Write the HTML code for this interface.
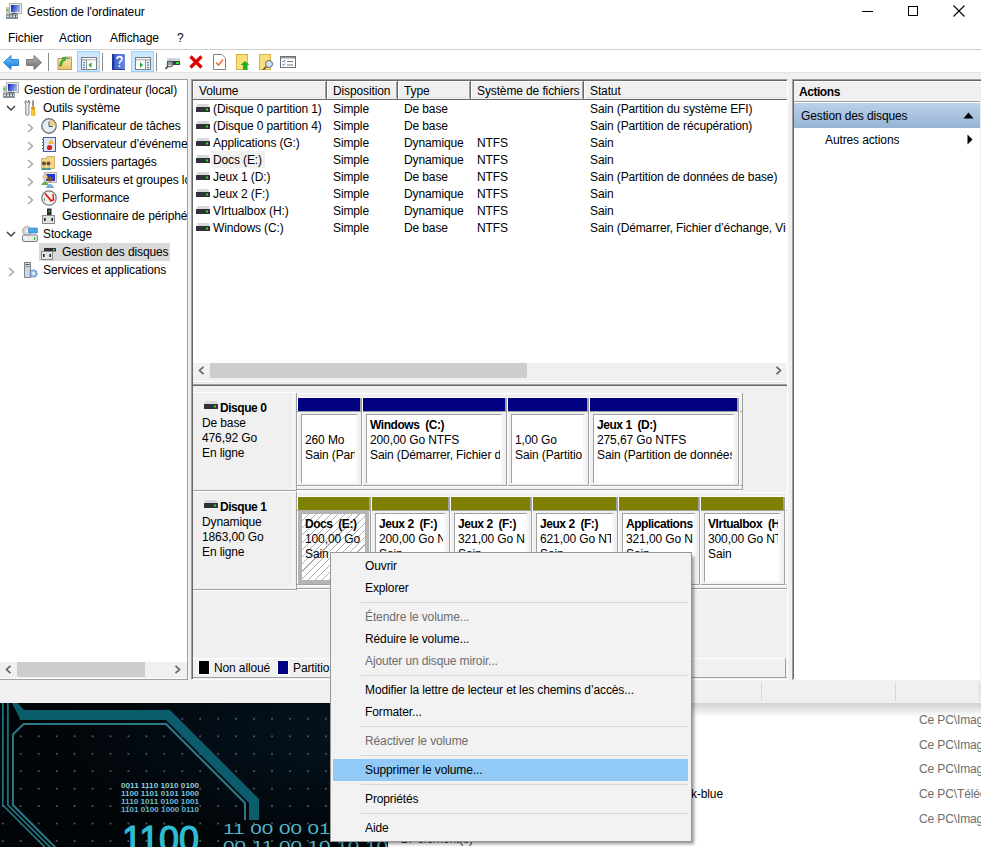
<!DOCTYPE html>
<html><head><meta charset="utf-8">
<style>
*{box-sizing:border-box}
html,body{margin:0;padding:0;width:981px;height:847px;overflow:hidden;background:#fff;position:relative;font-family:"Liberation Sans",sans-serif}
.a{position:absolute;display:block}
.t{position:absolute;font:12px/15px "Liberation Sans",sans-serif;white-space:nowrap;color:#000;letter-spacing:-0.12px}
.b{font-weight:bold;letter-spacing:-0.45px}
.g{color:#6d6d6d}
.gp{color:#6d6d6d}
</style></head><body>

<div class="a" style="left:388px;top:703px;width:593px;height:144px;background:#fff"></div>
<div class="t" style="left:919px;top:713px;color:#6d6d6d">Ce PC\Imag</div>
<div class="t" style="left:919px;top:738px;color:#6d6d6d">Ce PC\Imag</div>
<div class="t" style="left:919px;top:762px;color:#6d6d6d">Ce PC\Imag</div>
<div class="t" style="left:919px;top:787px;color:#6d6d6d">Ce PC\Téléc</div>
<div class="t" style="left:919px;top:812px;color:#6d6d6d">Ce PC\Imag</div>
<div class="t" style="left:691px;top:787px;">k-blue</div>
<div class="t" style="left:401px;top:832px;color:#333">27 élément(s)</div>
<svg class="a" style="left:0;top:703px" width="388" height="144" viewBox="0 0 388 144"><defs><radialGradient id="bgg" cx="0.9" cy="0.2" r="0.8"><stop offset="0" stop-color="#05131f"/><stop offset="1" stop-color="#010508"/></radialGradient></defs><rect width="388" height="144" fill="url(#bgg)"/><g fill="#4a5a60"><rect x="1.9" y="14.9" width="1.8" height="1.8"/><rect x="19.8" y="14.9" width="1.8" height="1.8"/><rect x="37.8" y="14.9" width="1.8" height="1.8"/><rect x="55.8" y="14.9" width="1.8" height="1.8"/><rect x="73.7" y="14.9" width="1.8" height="1.8"/><rect x="91.7" y="14.9" width="1.8" height="1.8"/><rect x="109.6" y="14.9" width="1.8" height="1.8"/><rect x="127.5" y="14.9" width="1.8" height="1.8"/><rect x="145.5" y="14.9" width="1.8" height="1.8"/><rect x="163.4" y="14.9" width="1.8" height="1.8"/><rect x="181.4" y="14.9" width="1.8" height="1.8"/><rect x="199.3" y="14.9" width="1.8" height="1.8"/><rect x="217.3" y="14.9" width="1.8" height="1.8"/><rect x="235.2" y="14.9" width="1.8" height="1.8"/><rect x="253.2" y="14.9" width="1.8" height="1.8"/><rect x="271.1" y="14.9" width="1.8" height="1.8"/><rect x="289.1" y="14.9" width="1.8" height="1.8"/><rect x="307.0" y="14.9" width="1.8" height="1.8"/><rect x="325.0" y="14.9" width="1.8" height="1.8"/><rect x="342.9" y="14.9" width="1.8" height="1.8"/><rect x="360.9" y="14.9" width="1.8" height="1.8"/><rect x="378.8" y="14.9" width="1.8" height="1.8"/><rect x="1.9" y="32.4" width="1.8" height="1.8"/><rect x="19.8" y="32.4" width="1.8" height="1.8"/><rect x="37.8" y="32.4" width="1.8" height="1.8"/><rect x="55.8" y="32.4" width="1.8" height="1.8"/><rect x="73.7" y="32.4" width="1.8" height="1.8"/><rect x="91.7" y="32.4" width="1.8" height="1.8"/><rect x="109.6" y="32.4" width="1.8" height="1.8"/><rect x="127.5" y="32.4" width="1.8" height="1.8"/><rect x="145.5" y="32.4" width="1.8" height="1.8"/><rect x="163.4" y="32.4" width="1.8" height="1.8"/><rect x="181.4" y="32.4" width="1.8" height="1.8"/><rect x="199.3" y="32.4" width="1.8" height="1.8"/><rect x="217.3" y="32.4" width="1.8" height="1.8"/><rect x="235.2" y="32.4" width="1.8" height="1.8"/><rect x="253.2" y="32.4" width="1.8" height="1.8"/><rect x="271.1" y="32.4" width="1.8" height="1.8"/><rect x="289.1" y="32.4" width="1.8" height="1.8"/><rect x="307.0" y="32.4" width="1.8" height="1.8"/><rect x="325.0" y="32.4" width="1.8" height="1.8"/><rect x="342.9" y="32.4" width="1.8" height="1.8"/><rect x="360.9" y="32.4" width="1.8" height="1.8"/><rect x="378.8" y="32.4" width="1.8" height="1.8"/><rect x="1.9" y="49.9" width="1.8" height="1.8"/><rect x="19.8" y="49.9" width="1.8" height="1.8"/><rect x="37.8" y="49.9" width="1.8" height="1.8"/><rect x="55.8" y="49.9" width="1.8" height="1.8"/><rect x="73.7" y="49.9" width="1.8" height="1.8"/><rect x="91.7" y="49.9" width="1.8" height="1.8"/><rect x="109.6" y="49.9" width="1.8" height="1.8"/><rect x="127.5" y="49.9" width="1.8" height="1.8"/><rect x="145.5" y="49.9" width="1.8" height="1.8"/><rect x="163.4" y="49.9" width="1.8" height="1.8"/><rect x="181.4" y="49.9" width="1.8" height="1.8"/><rect x="199.3" y="49.9" width="1.8" height="1.8"/><rect x="217.3" y="49.9" width="1.8" height="1.8"/><rect x="235.2" y="49.9" width="1.8" height="1.8"/><rect x="253.2" y="49.9" width="1.8" height="1.8"/><rect x="271.1" y="49.9" width="1.8" height="1.8"/><rect x="289.1" y="49.9" width="1.8" height="1.8"/><rect x="307.0" y="49.9" width="1.8" height="1.8"/><rect x="325.0" y="49.9" width="1.8" height="1.8"/><rect x="342.9" y="49.9" width="1.8" height="1.8"/><rect x="360.9" y="49.9" width="1.8" height="1.8"/><rect x="378.8" y="49.9" width="1.8" height="1.8"/><rect x="1.9" y="67.3" width="1.8" height="1.8"/><rect x="19.8" y="67.3" width="1.8" height="1.8"/><rect x="37.8" y="67.3" width="1.8" height="1.8"/><rect x="55.8" y="67.3" width="1.8" height="1.8"/><rect x="73.7" y="67.3" width="1.8" height="1.8"/><rect x="91.7" y="67.3" width="1.8" height="1.8"/><rect x="109.6" y="67.3" width="1.8" height="1.8"/><rect x="127.5" y="67.3" width="1.8" height="1.8"/><rect x="145.5" y="67.3" width="1.8" height="1.8"/><rect x="163.4" y="67.3" width="1.8" height="1.8"/><rect x="181.4" y="67.3" width="1.8" height="1.8"/><rect x="199.3" y="67.3" width="1.8" height="1.8"/><rect x="217.3" y="67.3" width="1.8" height="1.8"/><rect x="235.2" y="67.3" width="1.8" height="1.8"/><rect x="253.2" y="67.3" width="1.8" height="1.8"/><rect x="271.1" y="67.3" width="1.8" height="1.8"/><rect x="289.1" y="67.3" width="1.8" height="1.8"/><rect x="307.0" y="67.3" width="1.8" height="1.8"/><rect x="325.0" y="67.3" width="1.8" height="1.8"/><rect x="342.9" y="67.3" width="1.8" height="1.8"/><rect x="360.9" y="67.3" width="1.8" height="1.8"/><rect x="378.8" y="67.3" width="1.8" height="1.8"/><rect x="1.9" y="84.8" width="1.8" height="1.8"/><rect x="19.8" y="84.8" width="1.8" height="1.8"/><rect x="37.8" y="84.8" width="1.8" height="1.8"/><rect x="55.8" y="84.8" width="1.8" height="1.8"/><rect x="73.7" y="84.8" width="1.8" height="1.8"/><rect x="91.7" y="84.8" width="1.8" height="1.8"/><rect x="109.6" y="84.8" width="1.8" height="1.8"/><rect x="127.5" y="84.8" width="1.8" height="1.8"/><rect x="145.5" y="84.8" width="1.8" height="1.8"/><rect x="163.4" y="84.8" width="1.8" height="1.8"/><rect x="181.4" y="84.8" width="1.8" height="1.8"/><rect x="199.3" y="84.8" width="1.8" height="1.8"/><rect x="217.3" y="84.8" width="1.8" height="1.8"/><rect x="235.2" y="84.8" width="1.8" height="1.8"/><rect x="253.2" y="84.8" width="1.8" height="1.8"/><rect x="271.1" y="84.8" width="1.8" height="1.8"/><rect x="289.1" y="84.8" width="1.8" height="1.8"/><rect x="307.0" y="84.8" width="1.8" height="1.8"/><rect x="325.0" y="84.8" width="1.8" height="1.8"/><rect x="342.9" y="84.8" width="1.8" height="1.8"/><rect x="360.9" y="84.8" width="1.8" height="1.8"/><rect x="378.8" y="84.8" width="1.8" height="1.8"/><rect x="1.9" y="102.2" width="1.8" height="1.8"/><rect x="19.8" y="102.2" width="1.8" height="1.8"/><rect x="37.8" y="102.2" width="1.8" height="1.8"/><rect x="55.8" y="102.2" width="1.8" height="1.8"/><rect x="73.7" y="102.2" width="1.8" height="1.8"/><rect x="91.7" y="102.2" width="1.8" height="1.8"/><rect x="109.6" y="102.2" width="1.8" height="1.8"/><rect x="127.5" y="102.2" width="1.8" height="1.8"/><rect x="145.5" y="102.2" width="1.8" height="1.8"/><rect x="163.4" y="102.2" width="1.8" height="1.8"/><rect x="181.4" y="102.2" width="1.8" height="1.8"/><rect x="199.3" y="102.2" width="1.8" height="1.8"/><rect x="217.3" y="102.2" width="1.8" height="1.8"/><rect x="235.2" y="102.2" width="1.8" height="1.8"/><rect x="253.2" y="102.2" width="1.8" height="1.8"/><rect x="271.1" y="102.2" width="1.8" height="1.8"/><rect x="289.1" y="102.2" width="1.8" height="1.8"/><rect x="307.0" y="102.2" width="1.8" height="1.8"/><rect x="325.0" y="102.2" width="1.8" height="1.8"/><rect x="342.9" y="102.2" width="1.8" height="1.8"/><rect x="360.9" y="102.2" width="1.8" height="1.8"/><rect x="378.8" y="102.2" width="1.8" height="1.8"/><rect x="1.9" y="119.6" width="1.8" height="1.8"/><rect x="19.8" y="119.6" width="1.8" height="1.8"/><rect x="37.8" y="119.6" width="1.8" height="1.8"/><rect x="55.8" y="119.6" width="1.8" height="1.8"/><rect x="73.7" y="119.6" width="1.8" height="1.8"/><rect x="91.7" y="119.6" width="1.8" height="1.8"/><rect x="109.6" y="119.6" width="1.8" height="1.8"/><rect x="127.5" y="119.6" width="1.8" height="1.8"/><rect x="145.5" y="119.6" width="1.8" height="1.8"/><rect x="163.4" y="119.6" width="1.8" height="1.8"/><rect x="181.4" y="119.6" width="1.8" height="1.8"/><rect x="199.3" y="119.6" width="1.8" height="1.8"/><rect x="217.3" y="119.6" width="1.8" height="1.8"/><rect x="235.2" y="119.6" width="1.8" height="1.8"/><rect x="253.2" y="119.6" width="1.8" height="1.8"/><rect x="271.1" y="119.6" width="1.8" height="1.8"/><rect x="289.1" y="119.6" width="1.8" height="1.8"/><rect x="307.0" y="119.6" width="1.8" height="1.8"/><rect x="325.0" y="119.6" width="1.8" height="1.8"/><rect x="342.9" y="119.6" width="1.8" height="1.8"/><rect x="360.9" y="119.6" width="1.8" height="1.8"/><rect x="378.8" y="119.6" width="1.8" height="1.8"/><rect x="1.9" y="137.1" width="1.8" height="1.8"/><rect x="19.8" y="137.1" width="1.8" height="1.8"/><rect x="37.8" y="137.1" width="1.8" height="1.8"/><rect x="55.8" y="137.1" width="1.8" height="1.8"/><rect x="73.7" y="137.1" width="1.8" height="1.8"/><rect x="91.7" y="137.1" width="1.8" height="1.8"/><rect x="109.6" y="137.1" width="1.8" height="1.8"/><rect x="127.5" y="137.1" width="1.8" height="1.8"/><rect x="145.5" y="137.1" width="1.8" height="1.8"/><rect x="163.4" y="137.1" width="1.8" height="1.8"/><rect x="181.4" y="137.1" width="1.8" height="1.8"/><rect x="199.3" y="137.1" width="1.8" height="1.8"/><rect x="217.3" y="137.1" width="1.8" height="1.8"/><rect x="235.2" y="137.1" width="1.8" height="1.8"/><rect x="253.2" y="137.1" width="1.8" height="1.8"/><rect x="271.1" y="137.1" width="1.8" height="1.8"/><rect x="289.1" y="137.1" width="1.8" height="1.8"/><rect x="307.0" y="137.1" width="1.8" height="1.8"/><rect x="325.0" y="137.1" width="1.8" height="1.8"/><rect x="342.9" y="137.1" width="1.8" height="1.8"/><rect x="360.9" y="137.1" width="1.8" height="1.8"/><rect x="378.8" y="137.1" width="1.8" height="1.8"/></g><path d="M17.5 0 L24 7 L170 7 L259 96 L259 117 L249 117 L249 100 L166 17 L20.5 17 L12 0 Z" fill="#0c5d6b"/><path d="M245 117 L245 100 L166 21 L23.6 21 L12.9 31.5 L12.9 102 L57.9 147" fill="none" stroke="#2a7a86" stroke-width="2"/><path d="M2.8 0 L2.8 102 L47.8 147" fill="none" stroke="#257a88" stroke-width="1.6"/><path d="M7.9 0 L7.9 102 L52.9 147" fill="none" stroke="#257a88" stroke-width="1.6"/><text x="121" y="85" font-family="Liberation Sans" font-weight="bold" font-size="7.8" fill="#8fd0dc" textLength="78" lengthAdjust="spacingAndGlyphs">0011 1110 1010 0100</text><text x="121" y="93" font-family="Liberation Sans" font-weight="bold" font-size="7.8" fill="#7cc4d4" textLength="78" lengthAdjust="spacingAndGlyphs">1100 1101 0101 1000</text><text x="121" y="101" font-family="Liberation Sans" font-weight="bold" font-size="7.8" fill="#70bccc" textLength="78" lengthAdjust="spacingAndGlyphs">1110 1011 0100 1001</text><text x="121" y="109" font-family="Liberation Sans" font-weight="bold" font-size="7.8" fill="#6ab6c8" textLength="78" lengthAdjust="spacingAndGlyphs">1101 0100 1000 0110</text><text x="122" y="149" font-family="Liberation Sans" font-size="36" fill="#2fbcd2" stroke="#2fbcd2" stroke-width="1.2" textLength="77" lengthAdjust="spacing">1100</text><text x="223" y="131" font-family="Liberation Sans" font-size="15.5" fill="#56b4c4" textLength="165" lengthAdjust="spacingAndGlyphs">11 00 00 01 01 01</text><text x="223" y="148" font-family="Liberation Sans" font-size="15.5" fill="#56b4c4" textLength="165" lengthAdjust="spacingAndGlyphs">00 11 00 10 10 10</text></svg>
<div class="a" style="left:0px;top:0px;width:981px;height:703px;background:#fff;"></div>
<svg class="a" style="left:6px;top:3px" width="16" height="16" viewBox="0 0 16 16"><defs><linearGradient id="scr" x1="0" y1="0" x2="1" y2="0.3"><stop offset="0" stop-color="#0a1fb8"/><stop offset="1" stop-color="#9ab0f0"/></linearGradient></defs><rect x="3.5" y="0.5" width="12" height="10" fill="#ecebe4" stroke="#b3b1a6"/><rect x="5" y="2" width="9" height="7" fill="url(#scr)"/><rect x="0" y="4" width="3" height="6" fill="#c8c8c8"/><rect x="0.5" y="6" width="2" height="2" fill="#40d040"/><path d="M5 11 Q8 9 11 11" stroke="#222" fill="none" stroke-width="1"/><rect x="0" y="10.5" width="12" height="5.5" rx="0.5" fill="#8a949c"/><rect x="1" y="12.5" width="10" height="1.5" fill="#dfe3e6"/><rect x="3" y="12" width="1" height="2.5" fill="#5a646c"/><rect x="6" y="12" width="1" height="2.5" fill="#5a646c"/><rect x="9" y="12" width="1" height="2.5" fill="#5a646c"/></svg>
<div class="t " style="left:27px;top:5px;">Gestion de l'ordinateur</div>
<div class="a" style="left:862px;top:11px;width:11px;height:1px;background:#000;"></div>
<div class="a" style="left:908px;top:6px;width:10px;height:10px;background:transparent;border:1px solid #000;box-sizing:border-box"></div>
<svg class="a" style="left:953px;top:5px;" width="12" height="12" viewBox="0 0 12 12"><path d="M0.5 0.5L11.5 11.5M11.5 0.5L0.5 11.5" stroke="#000" stroke-width="1.1"/></svg>
<div class="t " style="left:8px;top:31px;">Fichier</div>
<div class="t " style="left:59px;top:31px;">Action</div>
<div class="t " style="left:110px;top:31px;">Affichage</div>
<div class="t " style="left:177px;top:31px;">?</div>
<div class="a" style="left:0px;top:49px;width:981px;height:1px;background:#cfcfcf;"></div>
<svg class="a" style="left:3px;top:55px" width="16" height="15" viewBox="0 0 16 15"><defs><linearGradient id="bk" x1="0" y1="0" x2="0" y2="1"><stop offset="0" stop-color="#7cc8ff"/><stop offset="1" stop-color="#0a74d8"/></linearGradient></defs><path d="M0.5 7.5 L8 0.5 L8 4.5 L15.5 4.5 L15.5 10.5 L8 10.5 L8 14.5 Z" fill="url(#bk)" stroke="#2f86d0" stroke-width="1"/></svg>
<svg class="a" style="left:26px;top:55px" width="16" height="15" viewBox="0 0 16 15"><defs><linearGradient id="fw" x1="0" y1="0" x2="0" y2="1"><stop offset="0" stop-color="#b8b8b8"/><stop offset="1" stop-color="#6a6a6a"/></linearGradient></defs><path d="M15.5 7.5 L8 0.5 L8 4.5 L0.5 4.5 L0.5 10.5 L8 10.5 L8 14.5 Z" fill="url(#fw)" stroke="#7a7a7a" stroke-width="1"/></svg>
<div class="a" style="left:48px;top:53px;width:1px;height:18px;background:#8c8c8c"></div>
<div class="a" style="left:102px;top:53px;width:1px;height:18px;background:#8c8c8c"></div>
<div class="a" style="left:156px;top:53px;width:1px;height:18px;background:#8c8c8c"></div>
<svg class="a" style="left:57px;top:54px" width="16" height="17" viewBox="0 0 16 17"><defs><linearGradient id="fo" x1="0" y1="0" x2="0" y2="1"><stop offset="0" stop-color="#fbe7a8"/><stop offset="1" stop-color="#e9c46e"/></linearGradient></defs><path d="M1 4.5 L9 4.5 L10 3 L14.5 3 L14.5 15.5 L1 15.5 Z" fill="url(#fo)" stroke="#c29a4a" stroke-width="1"/><rect x="10" y="4" width="3" height="1.2" fill="#4aa0e0"/><path d="M2.5 12 Q3 7 6 5 L5 3.5 L9.5 3 L8 7 L7.2 6 Q5 8 4.5 12 Z" fill="#34b234" stroke="#1e8a1e" stroke-width="0.5"/></svg>
<div class="a" style="left:77px;top:51px;width:23px;height:21px;background:#cce8ff;border:1px solid #99d1ff"></div>
<div class="a" style="left:131px;top:51px;width:23px;height:21px;background:#cce8ff;border:1px solid #99d1ff"></div>
<svg class="a" style="left:81px;top:57px" width="16" height="13" viewBox="0 0 16 13"><rect x="0.5" y="0.5" width="15" height="12" fill="#f7f7f7" stroke="#7e7e7e"/><rect x="1" y="2.5" width="14" height="1" fill="#8e8e8e"/><rect x="11" y="1" width="1.5" height="1.2" fill="#fff"/><rect x="13" y="1" width="1.5" height="1.2" fill="#fff"/><rect x="2" y="5" width="2" height="1.2" fill="#3b7ccf"/><rect x="2" y="7.5" width="2" height="1.2" fill="#3b7ccf"/><rect x="2" y="10" width="2" height="1.2" fill="#3b7ccf"/><rect x="5" y="3" width="1" height="10" fill="#8e8e8e"/><rect x="6" y="3.5" width="9" height="8.5" fill="#fff"/><path d="M10.5 5 L7.5 8 L10.5 11 Z" fill="#2fae2f"/></svg>
<svg class="a" style="left:112px;top:54px" width="13" height="16" viewBox="0 0 13 16"><defs><linearGradient id="hl" x1="0" y1="0" x2="1" y2="0"><stop offset="0" stop-color="#3a5cc8"/><stop offset="1" stop-color="#6a88dc"/></linearGradient></defs><rect x="0" y="0" width="13" height="16" fill="url(#hl)"/><rect x="0" y="0" width="2.2" height="16" fill="#1c3a9c"/><rect x="0" y="15" width="13" height="1" fill="#22409c"/><path d="M5 5 Q5 2.6 7.5 2.6 Q10 2.6 10 5 Q10 6.6 8.3 7.6 Q7.4 8.2 7.4 9.8" fill="none" stroke="#fff" stroke-width="1.6"/><rect x="6.6" y="11.3" width="1.7" height="1.7" fill="#fff"/></svg>
<svg class="a" style="left:135px;top:57px" width="16" height="13" viewBox="0 0 16 13"><rect x="0.5" y="0.5" width="15" height="12" fill="#f7f7f7" stroke="#7e7e7e"/><rect x="1" y="2.5" width="14" height="1" fill="#8e8e8e"/><rect x="11" y="1" width="1.5" height="1.2" fill="#fff"/><rect x="13" y="1" width="1.5" height="1.2" fill="#fff"/><rect x="12" y="5" width="2" height="1.2" fill="#3b7ccf"/><rect x="12" y="7.5" width="2" height="1.2" fill="#3b7ccf"/><rect x="12" y="10" width="2" height="1.2" fill="#3b7ccf"/><rect x="10" y="3" width="1" height="10" fill="#8e8e8e"/><rect x="1" y="3.5" width="9" height="8.5" fill="#fff"/><path d="M5 5 L8 8 L5 11 Z" fill="#2fae2f"/></svg>
<svg class="a" style="left:165px;top:56px" width="16" height="14" viewBox="0 0 16 14"><rect x="2" y="2" width="13" height="3" rx="1" fill="#d0d4d8"/><rect x="2" y="5" width="13" height="4" fill="#3a3f44"/><rect x="11" y="6" width="3" height="2" fill="#38e038"/><circle cx="5" cy="8" r="3" fill="#a8c8e0" fill-opacity="0.7" stroke="#555" stroke-width="1"/><path d="M3 10 L0.5 13" stroke="#444" stroke-width="1.6"/></svg>
<svg class="a" style="left:189px;top:55px" width="14" height="14" viewBox="0 0 14 14"><path d="M1.5 1.5 L12.5 12.5 M12.5 1.5 L1.5 12.5" stroke="#e00000" stroke-width="3.2"/></svg>
<svg class="a" style="left:213px;top:54px" width="13" height="16" viewBox="0 0 13 16"><path d="M0.5 0.5 L9 0.5 L12.5 4 L12.5 15.5 L0.5 15.5 Z" fill="#fff" stroke="#7f7f7f"/><path d="M3 8.5 L5.5 11 L10 5.5" fill="none" stroke="#f07030" stroke-width="1.6"/></svg>
<svg class="a" style="left:236px;top:54px" width="14" height="16" viewBox="0 0 14 16"><rect x="0.5" y="0.5" width="11" height="15" fill="#fbe07a" stroke="#d6b24a"/><path d="M9 7 L13.5 11 L11 11 L11 16 L7 16 L7 11 L4.5 11 Z" fill="#20b020"/></svg>
<svg class="a" style="left:259px;top:54px" width="15" height="16" viewBox="0 0 15 16"><rect x="0.5" y="0.5" width="11" height="15" fill="#fbe07a" stroke="#d6b24a"/><circle cx="10" cy="10" r="3.5" fill="#cfe4f4" stroke="#606a74" stroke-width="1"/><path d="M7.5 12.5 L4 16" stroke="#505050" stroke-width="1.6"/></svg>
<svg class="a" style="left:280px;top:56px" width="16" height="12" viewBox="0 0 16 12"><rect x="0.5" y="0.5" width="15" height="11" fill="#fff" stroke="#6f6f6f"/><rect x="1" y="1" width="14" height="1.5" fill="#9a9a9a"/><path d="M2.5 5 L3.5 6 L5 4" fill="none" stroke="#2a70d0" stroke-width="1"/><path d="M2.5 8.5 L3.5 9.5 L5 7.5" fill="none" stroke="#2a70d0" stroke-width="1"/><rect x="7" y="5" width="6" height="1" fill="#7a7a7a"/><rect x="7" y="8.5" width="6" height="1" fill="#7a7a7a"/></svg>
<div class="a" style="left:0px;top:72px;width:981px;height:1px;background:#e3e3e3;"></div>
<div class="a" style="left:0px;top:73px;width:981px;height:630px;background:#f0f0f0;"></div>
<div class="a" style="left:0px;top:79px;width:188px;height:601px;background:#fff;border-top:1px solid #a0a0a0;border-right:1px solid #a0a0a0;border-bottom:1px solid #a0a0a0"></div>
<div class="a" style="left:0;top:0;width:187px;height:679px;overflow:hidden">
<svg class="a" style="left:3px;top:82px" width="16" height="16" viewBox="0 0 16 16"><defs><linearGradient id="scr" x1="0" y1="0" x2="1" y2="0.3"><stop offset="0" stop-color="#0a1fb8"/><stop offset="1" stop-color="#9ab0f0"/></linearGradient></defs><rect x="3.5" y="0.5" width="12" height="10" fill="#ecebe4" stroke="#b3b1a6"/><rect x="5" y="2" width="9" height="7" fill="url(#scr)"/><rect x="0" y="4" width="3" height="6" fill="#c8c8c8"/><rect x="0.5" y="6" width="2" height="2" fill="#40d040"/><path d="M5 11 Q8 9 11 11" stroke="#222" fill="none" stroke-width="1"/><rect x="0" y="10.5" width="12" height="5.5" rx="0.5" fill="#8a949c"/><rect x="1" y="12.5" width="10" height="1.5" fill="#dfe3e6"/><rect x="3" y="12" width="1" height="2.5" fill="#5a646c"/><rect x="6" y="12" width="1" height="2.5" fill="#5a646c"/><rect x="9" y="12" width="1" height="2.5" fill="#5a646c"/></svg>
<div class="t " style="left:24px;top:83px;">Gestion de l’ordinateur (local)</div>
<svg class="a" style="left:6px;top:105px" width="10" height="7" viewBox="0 0 10 7"><path d="M1 1 L5 5 L9 1" fill="none" stroke="#404040" stroke-width="1.5"/></svg>
<svg class="a" style="left:24px;top:100px" width="12" height="16" viewBox="0 0 12 16"><path d="M1.8 4.5 Q-0.2 2.5 1.6 0.4 L2.6 2.6 L4.2 2.6 L4.6 0.2 Q6.8 1.6 5.2 4.5 L4.9 5.8 L4.9 14.6 Q3.3 16.2 1.8 14.6 Z" fill="#f2f2f2" stroke="#6c6c6c" stroke-width="0.9"/><rect x="8.3" y="0.3" width="1.6" height="6.5" fill="#7c7c7c"/><rect x="7" y="7" width="4.2" height="2.4" rx="0.6" fill="#e2a400"/><rect x="7.7" y="9.3" width="2.8" height="1" fill="#c48a00"/><rect x="7" y="10.2" width="4.2" height="5.6" rx="1" fill="#eeb400"/><rect x="8" y="10.8" width="1.2" height="4" fill="#ffd84a"/></svg>
<div class="t " style="left:43px;top:101px;">Outils système</div>
<svg class="a" style="left:27px;top:123px" width="7" height="10" viewBox="0 0 7 10"><path d="M1 1 L5.5 5 L1 9" fill="none" stroke="#a6a6a6" stroke-width="1.5"/></svg>
<svg class="a" style="left:41px;top:118px" width="16" height="16" viewBox="0 0 16 16"><circle cx="8" cy="8" r="7.2" fill="#e4eef6" stroke="#777" stroke-width="1.4"/><path d="M8 8 L8 1.5 A6.5 6.5 0 0 1 14.5 8 Z" fill="#f0d08a"/><path d="M8 3.5 L8 8.5 L12 8.5" fill="none" stroke="#4a5a70" stroke-width="1"/></svg>
<div class="t " style="left:62px;top:119px;">Planificateur de tâches</div>
<svg class="a" style="left:27px;top:141px" width="7" height="10" viewBox="0 0 7 10"><path d="M1 1 L5.5 5 L1 9" fill="none" stroke="#a6a6a6" stroke-width="1.5"/></svg>
<svg class="a" style="left:42px;top:137px" width="14" height="15" viewBox="0 0 14 15"><rect x="1.5" y="0.5" width="12" height="14" fill="#dde6f4" stroke="#4a5aa8"/><g fill="#666"><rect x="0" y="2" width="2" height="1"/><rect x="0" y="5" width="2" height="1"/><rect x="0" y="8" width="2" height="1"/><rect x="0" y="11" width="2" height="1"/></g><path d="M9 2 L12 7 L6 7 Z" fill="#f2c020"/><circle cx="7.5" cy="10.5" r="2.6" fill="#d82020"/></svg>
<div class="t " style="left:62px;top:137px;">Observateur d’événements</div>
<svg class="a" style="left:27px;top:159px" width="7" height="10" viewBox="0 0 7 10"><path d="M1 1 L5.5 5 L1 9" fill="none" stroke="#a6a6a6" stroke-width="1.5"/></svg>
<svg class="a" style="left:41px;top:156px" width="14" height="14" viewBox="0 0 14 14"><path d="M0.5 2.5 L5 2.5 L6 0.5 L13.5 0.5 L13.5 12.5 L0.5 12.5 Z" fill="#f4d488" stroke="#c8a050" stroke-width="0.8"/><circle cx="3" cy="7.5" r="2" fill="#6a4a30"/><path d="M0 14 Q3 9 6 14 Z" fill="#30a060"/><circle cx="7.5" cy="7.5" r="2" fill="#6a4a30"/><path d="M4.5 14 Q7.5 9 10.5 14 Z" fill="#3090c0"/></svg>
<div class="t " style="left:62px;top:155px;">Dossiers partagés</div>
<svg class="a" style="left:27px;top:177px" width="7" height="10" viewBox="0 0 7 10"><path d="M1 1 L5.5 5 L1 9" fill="none" stroke="#a6a6a6" stroke-width="1.5"/></svg>
<svg class="a" style="left:41px;top:172px" width="16" height="16" viewBox="0 0 16 16"><rect x="3.5" y="0.5" width="12" height="10" fill="#e4e2da" stroke="#b8b6ac"/><rect x="5" y="2" width="9" height="7" fill="#1a3ad0"/><circle cx="4" cy="5" r="2.6" fill="#e8c890"/><path d="M0 13 Q4 6 8 13 Z" fill="#70a850"/><circle cx="9" cy="7" r="2.6" fill="#7a5030"/><path d="M4.5 16 Q9 8 13.5 16 Z" fill="#7ab0e0"/></svg>
<div class="t " style="left:62px;top:173px;">Utilisateurs et groupes locaux</div>
<svg class="a" style="left:27px;top:195px" width="7" height="10" viewBox="0 0 7 10"><path d="M1 1 L5.5 5 L1 9" fill="none" stroke="#a6a6a6" stroke-width="1.5"/></svg>
<svg class="a" style="left:41px;top:190px" width="16" height="16" viewBox="0 0 16 16"><circle cx="8" cy="8" r="7.2" fill="#f4f2ec" stroke="#7a7a7a" stroke-width="1.3"/><path d="M4 3.5 L10 10.5" stroke="#e01010" stroke-width="1.8"/><path d="M12 4 L12.5 10 L9 11" fill="none" stroke="#e01010" stroke-width="1.4"/><path d="M3.5 8 L3.5 11" stroke="#5a9a7a" stroke-width="1"/></svg>
<div class="t " style="left:62px;top:191px;">Performance</div>
<svg class="a" style="left:42px;top:208px" width="13" height="16" viewBox="0 0 13 16"><rect x="5" y="0.5" width="4.5" height="7" fill="#2a2a2a"/><rect x="6.5" y="2.5" width="1.4" height="1.4" fill="#40e040"/><rect x="0.5" y="7.5" width="12" height="8" fill="#e2e2e2" stroke="#8a8a8a"/><rect x="2" y="10" width="1.6" height="3" fill="#222"/><rect x="9.4" y="10" width="1.6" height="3" fill="#222"/></svg>
<div class="t " style="left:62px;top:209px;">Gestionnaire de périphériques</div>
<svg class="a" style="left:6px;top:231px" width="10" height="7" viewBox="0 0 10 7"><path d="M1 1 L5 5 L9 1" fill="none" stroke="#404040" stroke-width="1.5"/></svg>
<svg class="a" style="left:22px;top:226px" width="16" height="16" viewBox="0 0 16 16"><circle cx="5" cy="5" r="4.5" fill="#d8d8d8" stroke="#9a9a9a" stroke-width="0.8"/><circle cx="5" cy="5" r="1.2" fill="#fff"/><rect x="6.5" y="2" width="9" height="5" rx="1" fill="#4aa8e8" stroke="#2a78b8" stroke-width="0.6"/><rect x="0.5" y="9" width="15" height="6.5" rx="1.5" fill="#ececec" stroke="#7c7c7c"/><rect x="12" y="11" width="1.2" height="3" fill="#30c030"/></svg>
<div class="t " style="left:43px;top:227px;">Stockage</div>
<div class="a" style="left:39px;top:243px;width:131px;height:18px;background:#d9d9d9"></div>
<svg class="a" style="left:41px;top:245px" width="16" height="15" viewBox="0 0 16 15"><rect x="3" y="0.5" width="12" height="3" fill="#d8dcdf"/><rect x="3" y="3" width="12" height="3.5" fill="#2e3236"/><rect x="12" y="4" width="1.6" height="1.6" fill="#40e040"/><rect x="0.5" y="6.5" width="11" height="8" fill="#e6e6e6" stroke="#8a8a8a"/><rect x="2" y="9" width="1.6" height="3" fill="#222"/><rect x="8.4" y="9" width="1.6" height="3" fill="#222"/></svg>
<div class="t " style="left:62px;top:245px;">Gestion des disques</div>
<svg class="a" style="left:8px;top:267px" width="7" height="10" viewBox="0 0 7 10"><path d="M1 1 L5.5 5 L1 9" fill="none" stroke="#a6a6a6" stroke-width="1.5"/></svg>
<svg class="a" style="left:24px;top:262px" width="14" height="16" viewBox="0 0 14 16"><rect x="0.5" y="0.5" width="6" height="15" fill="#cfd6dc" stroke="#7a8894"/><rect x="1.5" y="2" width="4" height="1" fill="#555"/><rect x="1.5" y="4" width="4" height="1" fill="#888"/><circle cx="9.5" cy="11.5" r="3.5" fill="#9ac0e8" stroke="#5a88c0" stroke-width="1.4" stroke-dasharray="1.4 0.9"/><circle cx="9.5" cy="11.5" r="1.3" fill="#fff"/></svg>
<div class="t " style="left:43px;top:263px;">Services et applications</div>
<div class="a" style="left:0;top:662px;width:187px;height:16px;background:#f0f0f0"></div>
<div class="a" style="left:17px;top:662px;width:128px;height:15px;background:#cdcdcd"></div>
<svg class="a" style="left:5px;top:665px" width="7" height="9" viewBox="0 0 7 9"><path d="M5.5 0.8 L1.5 4.5 L5.5 8.2" fill="none" stroke="#606060" stroke-width="1.6"/></svg>
<svg class="a" style="left:174px;top:665px" width="7" height="9" viewBox="0 0 7 9"><path d="M1.5 0.8 L5.5 4.5 L1.5 8.2" fill="none" stroke="#606060" stroke-width="1.6"/></svg>
</div>
<div class="a" style="left:191px;top:79px;width:597px;height:601px;background:#f0f0f0;border-top:1px solid #a0a0a0;border-left:1px solid #a0a0a0;border-right:1px solid #fff;border-bottom:1px solid #fff"></div>
<div class="a" style="left:192px;top:80px;width:595px;height:599px;background:transparent;border-top:1px solid #696969;border-left:1px solid #696969"></div>
<div class="a" style="left:193px;top:81px;width:594px;height:299px;background:#fff;overflow:hidden">
<div class="a" style="left:0;top:0;width:594px;height:19px;background:#f0f0f0;border-top:1px solid #fff;border-bottom:1px solid #a0a0a0"></div>
<div class="a" style="left:0;top:18px;width:594px;height:1px;background:#696969"></div>
<div class="a" style="left:0;top:16px;width:594px;height:1px;background:#e3e3e3"></div>
<div class="a" style="left:0;top:0;width:1px;height:18px;background:#fff"></div>
<div class="a" style="left:132px;top:1px;width:1px;height:16px;background:#a0a0a0"></div>
<div class="a" style="left:133px;top:0;width:1px;height:18px;background:#696969"></div>
<div class="a" style="left:134px;top:1px;width:1px;height:16px;background:#fff"></div>
<div class="a" style="left:203px;top:1px;width:1px;height:16px;background:#a0a0a0"></div>
<div class="a" style="left:204px;top:0;width:1px;height:18px;background:#696969"></div>
<div class="a" style="left:205px;top:1px;width:1px;height:16px;background:#fff"></div>
<div class="a" style="left:276px;top:1px;width:1px;height:16px;background:#a0a0a0"></div>
<div class="a" style="left:277px;top:0;width:1px;height:18px;background:#696969"></div>
<div class="a" style="left:278px;top:1px;width:1px;height:16px;background:#fff"></div>
<div class="a" style="left:389px;top:1px;width:1px;height:16px;background:#a0a0a0"></div>
<div class="a" style="left:390px;top:0;width:1px;height:18px;background:#696969"></div>
<div class="a" style="left:391px;top:1px;width:1px;height:16px;background:#fff"></div>
<div class="t " style="left:6px;top:3px;">Volume</div>
<div class="t " style="left:140px;top:3px;">Disposition</div>
<div class="t " style="left:211px;top:3px;">Type</div>
<div class="t " style="left:284px;top:3px;">Système de fichiers</div>
<div class="t " style="left:397px;top:3px;">Statut</div>
<svg class="a" style="left:3px;top:23px" width="14" height="8" viewBox="0 0 14 8"><rect x="1" y="0" width="12" height="3" rx="0.5" fill="#d6dadd"/><rect x="0" y="3" width="14" height="5" fill="#2f3337"/><rect x="10" y="4.5" width="2" height="2" fill="#3ad83a"/></svg>
<div class="t " style="left:20px;top:21px;">(Disque 0 partition 1)</div>
<div class="t " style="left:140px;top:21px;">Simple</div>
<div class="t " style="left:211px;top:21px;">De base</div>
<div class="a" style="left:397px;top:21px;width:196px;height:16px;overflow:hidden"><div class="t" style="left:0;top:0">Sain (Partition du système EFI)</div></div>
<svg class="a" style="left:3px;top:40px" width="14" height="8" viewBox="0 0 14 8"><rect x="1" y="0" width="12" height="3" rx="0.5" fill="#d6dadd"/><rect x="0" y="3" width="14" height="5" fill="#2f3337"/><rect x="10" y="4.5" width="2" height="2" fill="#3ad83a"/></svg>
<div class="t " style="left:20px;top:38px;">(Disque 0 partition 4)</div>
<div class="t " style="left:140px;top:38px;">Simple</div>
<div class="t " style="left:211px;top:38px;">De base</div>
<div class="a" style="left:397px;top:38px;width:196px;height:16px;overflow:hidden"><div class="t" style="left:0;top:0">Sain (Partition de récupération)</div></div>
<svg class="a" style="left:3px;top:57px" width="14" height="8" viewBox="0 0 14 8"><rect x="1" y="0" width="12" height="3" rx="0.5" fill="#d6dadd"/><rect x="0" y="3" width="14" height="5" fill="#2f3337"/><rect x="10" y="4.5" width="2" height="2" fill="#3ad83a"/></svg>
<div class="t " style="left:20px;top:55px;">Applications (G:)</div>
<div class="t " style="left:140px;top:55px;">Simple</div>
<div class="t " style="left:211px;top:55px;">Dynamique</div>
<div class="t " style="left:284px;top:55px;">NTFS</div>
<div class="a" style="left:397px;top:55px;width:196px;height:16px;overflow:hidden"><div class="t" style="left:0;top:0">Sain</div></div>
<div class="a" style="left:18px;top:70px;width:54px;height:17px;background:#f0f0f0"></div>
<svg class="a" style="left:3px;top:74px" width="14" height="8" viewBox="0 0 14 8"><rect x="1" y="0" width="12" height="3" rx="0.5" fill="#d6dadd"/><rect x="0" y="3" width="14" height="5" fill="#2f3337"/><rect x="10" y="4.5" width="2" height="2" fill="#3ad83a"/></svg>
<div class="t " style="left:20px;top:72px;">Docs (E:)</div>
<div class="t " style="left:140px;top:72px;">Simple</div>
<div class="t " style="left:211px;top:72px;">Dynamique</div>
<div class="t " style="left:284px;top:72px;">NTFS</div>
<div class="a" style="left:397px;top:72px;width:196px;height:16px;overflow:hidden"><div class="t" style="left:0;top:0">Sain</div></div>
<svg class="a" style="left:3px;top:91px" width="14" height="8" viewBox="0 0 14 8"><rect x="1" y="0" width="12" height="3" rx="0.5" fill="#d6dadd"/><rect x="0" y="3" width="14" height="5" fill="#2f3337"/><rect x="10" y="4.5" width="2" height="2" fill="#3ad83a"/></svg>
<div class="t " style="left:20px;top:89px;">Jeux 1 (D:)</div>
<div class="t " style="left:140px;top:89px;">Simple</div>
<div class="t " style="left:211px;top:89px;">De base</div>
<div class="t " style="left:284px;top:89px;">NTFS</div>
<div class="a" style="left:397px;top:89px;width:196px;height:16px;overflow:hidden"><div class="t" style="left:0;top:0">Sain (Partition de données de base)</div></div>
<svg class="a" style="left:3px;top:108px" width="14" height="8" viewBox="0 0 14 8"><rect x="1" y="0" width="12" height="3" rx="0.5" fill="#d6dadd"/><rect x="0" y="3" width="14" height="5" fill="#2f3337"/><rect x="10" y="4.5" width="2" height="2" fill="#3ad83a"/></svg>
<div class="t " style="left:20px;top:106px;">Jeux 2 (F:)</div>
<div class="t " style="left:140px;top:106px;">Simple</div>
<div class="t " style="left:211px;top:106px;">Dynamique</div>
<div class="t " style="left:284px;top:106px;">NTFS</div>
<div class="a" style="left:397px;top:106px;width:196px;height:16px;overflow:hidden"><div class="t" style="left:0;top:0">Sain</div></div>
<svg class="a" style="left:3px;top:125px" width="14" height="8" viewBox="0 0 14 8"><rect x="1" y="0" width="12" height="3" rx="0.5" fill="#d6dadd"/><rect x="0" y="3" width="14" height="5" fill="#2f3337"/><rect x="10" y="4.5" width="2" height="2" fill="#3ad83a"/></svg>
<div class="t " style="left:20px;top:123px;">VIrtualbox (H:)</div>
<div class="t " style="left:140px;top:123px;">Simple</div>
<div class="t " style="left:211px;top:123px;">Dynamique</div>
<div class="t " style="left:284px;top:123px;">NTFS</div>
<div class="a" style="left:397px;top:123px;width:196px;height:16px;overflow:hidden"><div class="t" style="left:0;top:0">Sain</div></div>
<svg class="a" style="left:3px;top:142px" width="14" height="8" viewBox="0 0 14 8"><rect x="1" y="0" width="12" height="3" rx="0.5" fill="#d6dadd"/><rect x="0" y="3" width="14" height="5" fill="#2f3337"/><rect x="10" y="4.5" width="2" height="2" fill="#3ad83a"/></svg>
<div class="t " style="left:20px;top:140px;">Windows (C:)</div>
<div class="t " style="left:140px;top:140px;">Simple</div>
<div class="t " style="left:211px;top:140px;">De base</div>
<div class="t " style="left:284px;top:140px;">NTFS</div>
<div class="a" style="left:397px;top:140px;width:196px;height:16px;overflow:hidden"><div class="t" style="left:0;top:0">Sain (Démarrer, Fichier d’échange, Vidage sur incident, Partition de données de base)</div></div>
<div class="a" style="left:0;top:282px;width:594px;height:17px;background:#f0f0f0"></div>
<div class="a" style="left:17px;top:282px;width:317px;height:15px;background:#cdcdcd"></div>
<svg class="a" style="left:5px;top:285px" width="7" height="9" viewBox="0 0 7 9"><path d="M5.5 0.8 L1.5 4.5 L5.5 8.2" fill="none" stroke="#606060" stroke-width="1.6"/></svg>
<svg class="a" style="left:582px;top:285px" width="7" height="9" viewBox="0 0 7 9"><path d="M1.5 0.8 L5.5 4.5 L1.5 8.2" fill="none" stroke="#606060" stroke-width="1.6"/></svg>
</div>
<div class="a" style="left:193px;top:381px;width:594px;height:1px;background:#fff"></div>
<div class="a" style="left:193px;top:382px;width:594px;height:1px;background:#e3e3e3"></div>
<div class="a" style="left:193px;top:384px;width:594px;height:1px;background:#a0a0a0"></div>
<div class="a" style="left:193px;top:385px;width:594px;height:1px;background:#696969"></div>
<div class="a" style="left:193px;top:388px;width:594px;height:1px;background:#fff"></div>
<div class="a" style="left:193px;top:386px;width:594px;height:293px;overflow:hidden;background:#f0f0f0">
<div class="a" style="left:-193px;top:-386px;width:981px;height:700px">
<div class="a" style="left:193px;top:392px;width:103px;height:98px;background:#f0f0f0"></div>
<div class="a" style="left:193px;top:392px;width:103px;height:1px;background:#fff"></div>
<div class="a" style="left:193px;top:490px;width:103px;height:1px;background:#a0a0a0"></div>
<div class="a" style="left:193px;top:491px;width:103px;height:1px;background:#fff"></div>
<div class="a" style="left:293px;top:393px;width:1px;height:96px;background:#fafafa"></div>
<div class="a" style="left:296px;top:393px;width:1px;height:98px;background:#a0a0a0"></div>
<div class="a" style="left:297px;top:393px;width:1px;height:97px;background:#fff"></div>
<div class="a" style="left:297px;top:393px;width:445px;height:1px;background:#fff"></div>
<div class="a" style="left:297px;top:397px;width:445px;height:1px;background:#fff"></div>
<div class="a" style="left:297px;top:411px;width:445px;height:1px;background:#a0a0a0"></div>
<div class="a" style="left:297px;top:485px;width:445px;height:1px;background:#a0a0a0"></div>
<div class="a" style="left:297px;top:486px;width:445px;height:1px;background:#fff"></div>
<div class="a" style="left:297px;top:489px;width:446px;height:1px;background:#a0a0a0"></div>
<div class="a" style="left:297px;top:490px;width:446px;height:1px;background:#fff"></div>
<svg class="a" style="left:204px;top:401px" width="14" height="8" viewBox="0 0 14 8"><rect x="1" y="0" width="12" height="3" rx="0.5" fill="#d6dadd"/><rect x="0" y="3" width="14" height="5" fill="#2f3337"/><rect x="10" y="4.5" width="2" height="2" fill="#3ad83a"/></svg>
<div class="t b" style="left:220px;top:401px;">Disque 0</div>
<div class="t " style="left:202px;top:416px;">De base</div>
<div class="t " style="left:202px;top:431px;">476,92 Go</div>
<div class="t " style="left:202px;top:446px;">En ligne</div>
<div class="a" style="left:742px;top:393px;width:1px;height:97px;background:#a0a0a0"></div>
<div class="a" style="left:298px;top:398px;width:62px;height:13px;background:#000080"></div>
<div class="a" style="left:360px;top:398px;width:2px;height:13px;background:#a0a0a0"></div>
<div class="a" style="left:361px;top:411px;width:1px;height:74px;background:#a0a0a0"></div>
<div class="a" style="left:362px;top:397px;width:1px;height:89px;background:#fff"></div>
<div class="a" style="left:298px;top:412px;width:63px;height:73px;background:#f0f0f0"></div>
<div class="a" style="left:301px;top:414px;width:57px;height:70px;background:#fff;border-left:1px solid #a0a0a0;border-top:1px solid #a0a0a0;border-right:2px solid #f7f7f7;border-bottom:2px solid #f7f7f7"></div>
<div class="a" style="left:305px;top:412px;width:50px;height:70px;overflow:hidden"><div class="t" style="left:0;top:21px">260 Mo</div><div class="t" style="left:0;top:36px">Sain (Partition du système EFI)</div></div>
<div class="a" style="left:363px;top:398px;width:142px;height:13px;background:#000080"></div>
<div class="a" style="left:505px;top:398px;width:2px;height:13px;background:#a0a0a0"></div>
<div class="a" style="left:506px;top:411px;width:1px;height:74px;background:#a0a0a0"></div>
<div class="a" style="left:507px;top:397px;width:1px;height:89px;background:#fff"></div>
<div class="a" style="left:363px;top:412px;width:143px;height:73px;background:#f0f0f0"></div>
<div class="a" style="left:366px;top:414px;width:137px;height:70px;background:#fff;border-left:1px solid #a0a0a0;border-top:1px solid #a0a0a0;border-right:2px solid #f7f7f7;border-bottom:2px solid #f7f7f7"></div>
<div class="a" style="left:370px;top:412px;width:130px;height:70px;overflow:hidden"><div class="t b" style="left:0;top:6px">Windows&nbsp; (C:)</div><div class="t" style="left:0;top:21px">200,00 Go NTFS</div><div class="t" style="left:0;top:36px">Sain (Démarrer, Fichier d’échange, Vidage</div></div>
<div class="a" style="left:508px;top:398px;width:79px;height:13px;background:#000080"></div>
<div class="a" style="left:587px;top:398px;width:2px;height:13px;background:#a0a0a0"></div>
<div class="a" style="left:588px;top:411px;width:1px;height:74px;background:#a0a0a0"></div>
<div class="a" style="left:589px;top:397px;width:1px;height:89px;background:#fff"></div>
<div class="a" style="left:508px;top:412px;width:80px;height:73px;background:#f0f0f0"></div>
<div class="a" style="left:511px;top:414px;width:74px;height:70px;background:#fff;border-left:1px solid #a0a0a0;border-top:1px solid #a0a0a0;border-right:2px solid #f7f7f7;border-bottom:2px solid #f7f7f7"></div>
<div class="a" style="left:515px;top:412px;width:67px;height:70px;overflow:hidden"><div class="t" style="left:0;top:21px">1,00 Go</div><div class="t" style="left:0;top:36px">Sain (Partition de récupération)</div></div>
<div class="a" style="left:590px;top:398px;width:147px;height:13px;background:#000080"></div>
<div class="a" style="left:737px;top:398px;width:2px;height:13px;background:#a0a0a0"></div>
<div class="a" style="left:738px;top:411px;width:1px;height:74px;background:#a0a0a0"></div>
<div class="a" style="left:739px;top:397px;width:1px;height:89px;background:#fff"></div>
<div class="a" style="left:590px;top:412px;width:148px;height:73px;background:#f0f0f0"></div>
<div class="a" style="left:593px;top:414px;width:142px;height:70px;background:#fff;border-left:1px solid #a0a0a0;border-top:1px solid #a0a0a0;border-right:2px solid #f7f7f7;border-bottom:2px solid #f7f7f7"></div>
<div class="a" style="left:597px;top:412px;width:135px;height:70px;overflow:hidden"><div class="t b" style="left:0;top:6px">Jeux 1&nbsp; (D:)</div><div class="t" style="left:0;top:21px">275,67 Go NTFS</div><div class="t" style="left:0;top:36px">Sain (Partition de données de base)</div></div>
<div class="a" style="left:193px;top:491px;width:103px;height:98px;background:#f0f0f0"></div>
<div class="a" style="left:193px;top:491px;width:103px;height:1px;background:#fff"></div>
<div class="a" style="left:193px;top:589px;width:103px;height:1px;background:#a0a0a0"></div>
<div class="a" style="left:193px;top:590px;width:103px;height:1px;background:#fff"></div>
<div class="a" style="left:293px;top:492px;width:1px;height:96px;background:#fafafa"></div>
<div class="a" style="left:296px;top:492px;width:1px;height:98px;background:#a0a0a0"></div>
<div class="a" style="left:297px;top:492px;width:1px;height:97px;background:#fff"></div>
<div class="a" style="left:297px;top:492px;width:503px;height:1px;background:#fff"></div>
<div class="a" style="left:297px;top:496px;width:503px;height:1px;background:#fff"></div>
<div class="a" style="left:297px;top:510px;width:503px;height:1px;background:#a0a0a0"></div>
<div class="a" style="left:297px;top:584px;width:503px;height:1px;background:#a0a0a0"></div>
<div class="a" style="left:297px;top:585px;width:503px;height:1px;background:#fff"></div>
<div class="a" style="left:297px;top:588px;width:504px;height:1px;background:#a0a0a0"></div>
<div class="a" style="left:297px;top:589px;width:504px;height:1px;background:#fff"></div>
<svg class="a" style="left:204px;top:500px" width="14" height="8" viewBox="0 0 14 8"><rect x="1" y="0" width="12" height="3" rx="0.5" fill="#d6dadd"/><rect x="0" y="3" width="14" height="5" fill="#2f3337"/><rect x="10" y="4.5" width="2" height="2" fill="#3ad83a"/></svg>
<div class="t b" style="left:220px;top:500px;">Disque 1</div>
<div class="t " style="left:202px;top:515px;">Dynamique</div>
<div class="t " style="left:202px;top:530px;">1863,00 Go</div>
<div class="t " style="left:202px;top:545px;">En ligne</div>
<div class="a" style="left:298px;top:497px;width:71px;height:13px;background:#808000"></div>
<div class="a" style="left:369px;top:497px;width:2px;height:13px;background:#a0a0a0"></div>
<div class="a" style="left:370px;top:510px;width:1px;height:74px;background:#a0a0a0"></div>
<div class="a" style="left:371px;top:496px;width:1px;height:89px;background:#fff"></div>
<div class="a" style="left:298px;top:511px;width:72px;height:73px;background:#f0f0f0"></div>
<div class="a" style="left:298px;top:510px;width:71px;height:74px;border:4px solid #b4b4b4;background:repeating-linear-gradient(-45deg,#fff 0px,#fff 4.3px,#b0b0b0 4.3px,#b0b0b0 5.1px)"></div>
<div class="a" style="left:305px;top:511px;width:59px;height:70px;overflow:hidden"><div class="t b" style="left:0;top:6px">Docs&nbsp; (E:)</div><div class="t" style="left:0;top:21px">100,00 Go NTFS</div><div class="t" style="left:0;top:36px">Sain</div></div>
<div class="a" style="left:372px;top:497px;width:76px;height:13px;background:#808000"></div>
<div class="a" style="left:448px;top:497px;width:2px;height:13px;background:#a0a0a0"></div>
<div class="a" style="left:449px;top:510px;width:1px;height:74px;background:#a0a0a0"></div>
<div class="a" style="left:450px;top:496px;width:1px;height:89px;background:#fff"></div>
<div class="a" style="left:372px;top:511px;width:77px;height:73px;background:#f0f0f0"></div>
<div class="a" style="left:375px;top:513px;width:71px;height:70px;background:#fff;border-left:1px solid #a0a0a0;border-top:1px solid #a0a0a0;border-right:2px solid #f7f7f7;border-bottom:2px solid #f7f7f7"></div>
<div class="a" style="left:379px;top:511px;width:64px;height:70px;overflow:hidden"><div class="t b" style="left:0;top:6px">Jeux 2&nbsp; (F:)</div><div class="t" style="left:0;top:21px">200,00 Go NTFS</div><div class="t" style="left:0;top:36px">Sain</div></div>
<div class="a" style="left:451px;top:497px;width:79px;height:13px;background:#808000"></div>
<div class="a" style="left:530px;top:497px;width:2px;height:13px;background:#a0a0a0"></div>
<div class="a" style="left:531px;top:510px;width:1px;height:74px;background:#a0a0a0"></div>
<div class="a" style="left:532px;top:496px;width:1px;height:89px;background:#fff"></div>
<div class="a" style="left:451px;top:511px;width:80px;height:73px;background:#f0f0f0"></div>
<div class="a" style="left:454px;top:513px;width:74px;height:70px;background:#fff;border-left:1px solid #a0a0a0;border-top:1px solid #a0a0a0;border-right:2px solid #f7f7f7;border-bottom:2px solid #f7f7f7"></div>
<div class="a" style="left:458px;top:511px;width:67px;height:70px;overflow:hidden"><div class="t b" style="left:0;top:6px">Jeux 2&nbsp; (F:)</div><div class="t" style="left:0;top:21px">321,00 Go NTFS</div><div class="t" style="left:0;top:36px">Sain</div></div>
<div class="a" style="left:533px;top:497px;width:83px;height:13px;background:#808000"></div>
<div class="a" style="left:616px;top:497px;width:2px;height:13px;background:#a0a0a0"></div>
<div class="a" style="left:617px;top:510px;width:1px;height:74px;background:#a0a0a0"></div>
<div class="a" style="left:618px;top:496px;width:1px;height:89px;background:#fff"></div>
<div class="a" style="left:533px;top:511px;width:84px;height:73px;background:#f0f0f0"></div>
<div class="a" style="left:536px;top:513px;width:78px;height:70px;background:#fff;border-left:1px solid #a0a0a0;border-top:1px solid #a0a0a0;border-right:2px solid #f7f7f7;border-bottom:2px solid #f7f7f7"></div>
<div class="a" style="left:540px;top:511px;width:71px;height:70px;overflow:hidden"><div class="t b" style="left:0;top:6px">Jeux 2&nbsp; (F:)</div><div class="t" style="left:0;top:21px">621,00 Go NTFS</div><div class="t" style="left:0;top:36px">Sain</div></div>
<div class="a" style="left:619px;top:497px;width:79px;height:13px;background:#808000"></div>
<div class="a" style="left:698px;top:497px;width:2px;height:13px;background:#a0a0a0"></div>
<div class="a" style="left:699px;top:510px;width:1px;height:74px;background:#a0a0a0"></div>
<div class="a" style="left:700px;top:496px;width:1px;height:89px;background:#fff"></div>
<div class="a" style="left:619px;top:511px;width:80px;height:73px;background:#f0f0f0"></div>
<div class="a" style="left:622px;top:513px;width:74px;height:70px;background:#fff;border-left:1px solid #a0a0a0;border-top:1px solid #a0a0a0;border-right:2px solid #f7f7f7;border-bottom:2px solid #f7f7f7"></div>
<div class="a" style="left:626px;top:511px;width:67px;height:70px;overflow:hidden"><div class="t b" style="left:0;top:6px">Applications&nbsp; (G:)</div><div class="t" style="left:0;top:21px">321,00 Go NTFS</div><div class="t" style="left:0;top:36px">Sain</div></div>
<div class="a" style="left:701px;top:497px;width:82px;height:13px;background:#808000"></div>
<div class="a" style="left:783px;top:497px;width:2px;height:13px;background:#a0a0a0"></div>
<div class="a" style="left:784px;top:510px;width:1px;height:74px;background:#a0a0a0"></div>
<div class="a" style="left:785px;top:496px;width:1px;height:89px;background:#fff"></div>
<div class="a" style="left:701px;top:511px;width:83px;height:73px;background:#f0f0f0"></div>
<div class="a" style="left:704px;top:513px;width:77px;height:70px;background:#fff;border-left:1px solid #a0a0a0;border-top:1px solid #a0a0a0;border-right:2px solid #f7f7f7;border-bottom:2px solid #f7f7f7"></div>
<div class="a" style="left:708px;top:511px;width:70px;height:70px;overflow:hidden"><div class="t b" style="left:0;top:6px">VIrtualbox&nbsp; (H:)</div><div class="t" style="left:0;top:21px">300,00 Go NTFS</div><div class="t" style="left:0;top:36px">Sain</div></div>
<div class="a" style="left:193px;top:658px;width:594px;height:21px;background:#f0f0f0"></div>
<div class="a" style="left:193px;top:658px;width:594px;height:1px;background:#fff"></div>
<div class="a" style="left:193px;top:677px;width:594px;height:1px;background:#a0a0a0"></div>
<div class="a" style="left:785px;top:658px;width:1px;height:20px;background:#a0a0a0"></div>
<div class="a" style="left:198px;top:660px;width:12px;height:15px;background:#000;border:1px solid #fff"></div>
<div class="t " style="left:214px;top:661px;">Non alloué</div>
<div class="a" style="left:277px;top:660px;width:12px;height:15px;background:#000080;border:1px solid #fff"></div>
<div class="t " style="left:293px;top:661px;">Partition principale</div>
</div></div>
<div class="a" style="left:792px;top:79px;width:189px;height:601px;background:#fff;border-top:1px solid #a0a0a0;border-left:1px solid #a0a0a0"></div>
<div class="a" style="left:793px;top:80px;width:188px;height:1px;background:#696969"></div>
<div class="a" style="left:793px;top:80px;width:1px;height:599px;background:#696969"></div>
<div class="a" style="left:794px;top:81px;width:186px;height:20px;background:#f0f0f0;border-top:1px solid #fff"></div>
<div class="a" style="left:794px;top:101px;width:186px;height:1px;background:#a0a0a0"></div>
<div class="a" style="left:794px;top:102px;width:186px;height:1px;background:#fff"></div>
<div class="t b" style="left:799px;top:85px;">Actions</div>
<div class="a" style="left:794px;top:103px;width:186px;height:25px;background:linear-gradient(#bad2ea,#97b3d4)"></div>
<div class="t " style="left:801px;top:109px;">Gestion des disques</div>
<svg class="a" style="left:963px;top:112px" width="11" height="7" viewBox="0 0 11 7"><path d="M0.5 6.5 L5.5 0.5 L10.5 6.5 Z" fill="#000"/></svg>
<div class="t " style="left:825px;top:133px;">Autres actions</div>
<svg class="a" style="left:967px;top:134px" width="6" height="11" viewBox="0 0 6 11"><path d="M0.5 0.5 L5.5 5.5 L0.5 10.5 Z" fill="#000"/></svg>
<div class="a" style="left:980px;top:81px;width:1px;height:598px;background:#f0f0f0"></div>
<div class="a" style="left:0px;top:680px;width:981px;height:23px;background:#f0f0f0;"></div>
<div class="a" style="left:761px;top:682px;width:1px;height:19px;background:#d9d9d9;"></div>
<div class="a" style="left:895px;top:682px;width:1px;height:19px;background:#d9d9d9;"></div>
<div class="a" style="left:979px;top:682px;width:1px;height:19px;background:#d9d9d9;"></div>
<div class="a" style="left:0px;top:703px;width:981px;height:14px;background:linear-gradient(rgba(0,0,0,0.18),rgba(0,0,0,0));left:388px;width:593px"></div>
<div class="a" style="left:330px;top:552px;width:362px;height:290px;background:#f2f2f2;border:1px solid #979797;box-shadow:3px 3px 3px -1px rgba(0,0,0,0.4)"></div>
<div class="t " style="left:365px;top:559px;">Ouvrir</div>
<div class="t " style="left:365px;top:581px;">Explorer</div>
<div class="a" style="left:361px;top:602px;width:327px;height:1px;background:#d7d7d7"></div>
<div class="t g" style="left:365px;top:610px;">Étendre le volume...</div>
<div class="t " style="left:365px;top:632px;">Réduire le volume...</div>
<div class="t g" style="left:365px;top:654px;">Ajouter un disque miroir...</div>
<div class="a" style="left:361px;top:675px;width:327px;height:1px;background:#d7d7d7"></div>
<div class="t " style="left:365px;top:683px;">Modifier la lettre de lecteur et les chemins d’accès...</div>
<div class="t " style="left:365px;top:705px;">Formater...</div>
<div class="a" style="left:361px;top:726px;width:327px;height:1px;background:#d7d7d7"></div>
<div class="t g" style="left:365px;top:734px;">Réactiver le volume</div>
<div class="a" style="left:361px;top:755px;width:327px;height:1px;background:#d7d7d7"></div>
<div class="a" style="left:333px;top:759px;width:355px;height:22px;background:#91c9f7"></div>
<div class="t " style="left:365px;top:763px;">Supprimer le volume...</div>
<div class="a" style="left:361px;top:784px;width:327px;height:1px;background:#d7d7d7"></div>
<div class="t " style="left:365px;top:792px;">Propriétés</div>
<div class="a" style="left:361px;top:813px;width:327px;height:1px;background:#d7d7d7"></div>
<div class="t " style="left:365px;top:821px;">Aide</div>
</body></html>
